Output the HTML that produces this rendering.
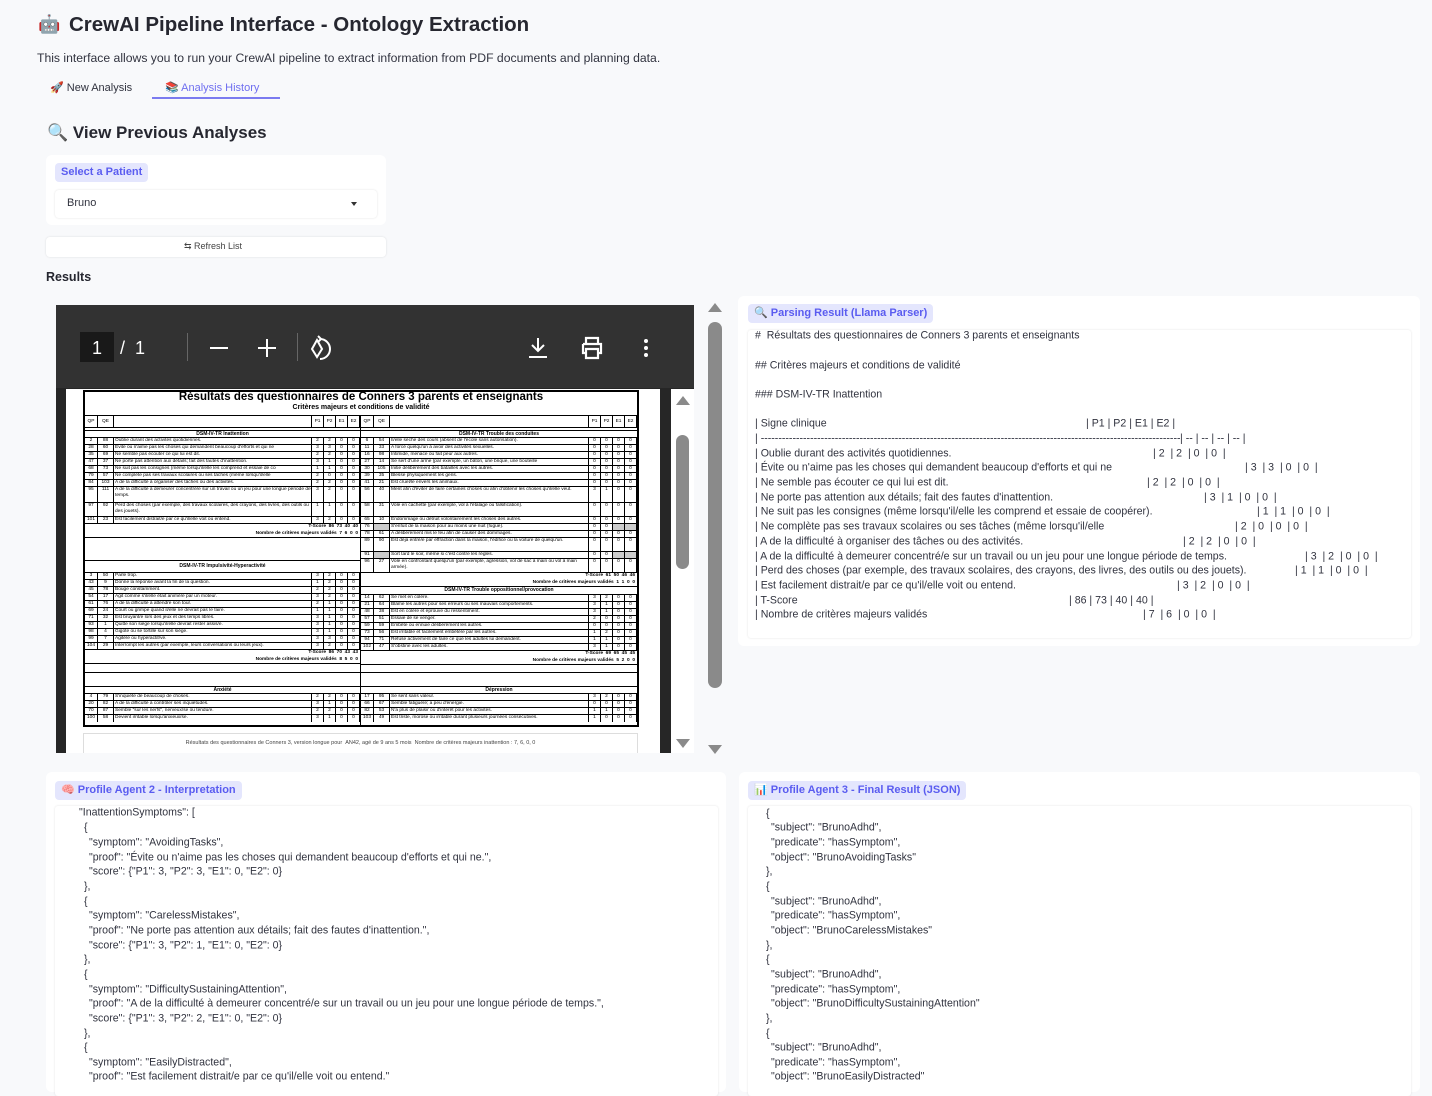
<!DOCTYPE html>
<html><head><meta charset="utf-8"><style>
*{margin:0;padding:0;box-sizing:border-box}
body{width:1432px;height:1080px;background:#f8f9fb;font-family:"Liberation Sans",sans-serif;color:#31333f;position:relative;overflow:hidden}
.a{position:absolute;white-space:nowrap}
.badge{position:absolute;background:#e4e6fd;color:#5a5cf0;font-weight:bold;font-size:11px;border-radius:4px;padding:3px 6px;height:19px;line-height:13px}
.panel{position:absolute;background:#fff;border-radius:6px}
.box{position:absolute;background:#fff;box-shadow:0 0 2px rgba(0,0,0,.12);border-radius:3px}
.t{position:absolute;font-size:10.6px;white-space:pre;color:#31333f;transform:translateY(1.5px)}
.half{position:absolute;font-family:"Liberation Sans",sans-serif;font-size:4.8px;color:#000}
.r{display:flex;border-bottom:1px solid #000;height:7px;line-height:6px;overflow:hidden}
.r span{border-right:1px solid #000;text-align:center;overflow:hidden}
.r span:nth-child(1){width:13px}.r span:nth-child(2){width:16px}
.r span:nth-child(3){flex:1;text-align:left;padding-left:1px}
.r span:nth-child(4),.r span:nth-child(5),.r span:nth-child(6),.r span:nth-child(7){width:12px}
.ttl{border-bottom:1px solid #000;text-align:center;font-weight:bold;height:8px;line-height:7px;font-size:5px}
.tall{height:14px;line-height:6px}
.ts{height:14px;text-align:right;font-weight:bold;padding-right:2px;line-height:6.5px;border-bottom:1px solid #000}
</style></head><body>

<div class="a" style="left:38px;top:14px;font-size:18px">🤖</div>
<div class="a" style="left:69px;top:13px;font-size:20.5px;font-weight:bold;color:#262730">CrewAI Pipeline Interface - Ontology Extraction</div>
<div class="a" style="left:37px;top:51px;font-size:12.2px">This interface allows you to run your CrewAI pipeline to extract information from PDF documents and planning data.</div>
<div class="a" style="left:50px;top:81px;font-size:11px">🚀 New Analysis</div>
<div class="a" style="left:165px;top:81px;font-size:11px;color:#6f6ff0">📚 Analysis History</div>
<div class="a" style="left:152px;top:97px;width:128px;height:2px;background:#7b7bf0"></div>
<div class="a" style="left:47px;top:123px;font-size:17px;font-weight:bold;color:#262730">🔍 View Previous Analyses</div>

<div class="panel" style="left:46px;top:155px;width:340px;height:70px"></div>
<div class="badge" style="left:55px;top:163px">Select a Patient</div>
<div class="box" style="left:55px;top:190px;width:322px;height:28px;border-radius:4px"></div>
<div class="a" style="left:67px;top:197px;font-size:11px">Bruno</div>
<div class="a" style="left:351px;top:202px;width:0;height:0;border-left:3px solid transparent;border-right:3px solid transparent;border-top:4px solid #333"></div>
<div class="box" style="left:46px;top:237px;width:340px;height:20px;border-radius:4px"></div>
<div class="a" style="left:184px;top:241px;font-size:9px;color:#444">⇆ Refresh List</div>
<div class="a" style="left:46px;top:270px;font-size:12.5px;font-weight:bold;color:#262730">Results</div>

<!-- PDF viewer -->
<div class="a" style="left:56px;top:305px;width:638px;height:448px;background:#262626"></div>
<div class="a" style="left:56px;top:305px;width:638px;height:83px;background:#323232"></div>
<div class="a" style="left:80px;top:332px;width:34px;height:30px;background:#191919"></div>
<div class="a" style="left:92px;top:338px;color:#fff;font-size:18px">1</div>
<div class="a" style="left:120px;top:338px;color:#fff;font-size:18px">/&nbsp;&nbsp;1</div>
<div class="a" style="left:187px;top:333px;width:1px;height:28px;background:#666"></div>
<div class="a" style="left:210px;top:347px;width:18px;height:2px;background:#fff"></div>
<div class="a" style="left:258px;top:347px;width:18px;height:2px;background:#fff"></div>
<div class="a" style="left:266px;top:339px;width:2px;height:18px;background:#fff"></div>
<div class="a" style="left:297px;top:333px;width:1px;height:28px;background:#666"></div>
<svg class="a" style="left:306px;top:335px" width="30" height="28" viewBox="0 0 30 28" fill="none" stroke="#fff" stroke-width="2"><path d="M11 5 L6 14 L11 22 L16 14 Z"/><path d="M14 4 A10 10 0 1 1 14 24"/><path d="M12 1 L15 4 L12 7"/></svg>
<svg class="a" style="left:527px;top:336px" width="22" height="24" viewBox="0 0 22 24" fill="none" stroke="#fff" stroke-width="2"><path d="M11 2 V15 M5 9 L11 15 L17 9 M2 21 H20"/></svg>
<svg class="a" style="left:579px;top:335px" width="26" height="26" viewBox="0 0 26 26" fill="none" stroke="#fff" stroke-width="2.2"><path d="M7 9 V3 H19 V9 M4 9 H22 V18 H19 M7 18 H4 V9 M7 14 H19 V23 H7 Z"/></svg>
<div class="a" style="left:644px;top:339px;width:4px;height:4px;border-radius:50%;background:#fff;box-shadow:0 7px 0 #fff,0 14px 0 #fff"></div>

<div class="a" style="left:66px;top:389px;width:594px;height:364px;background:#fff"></div>
<div class="a" style="left:671px;top:389px;width:23px;height:364px;background:#fff"></div>
<div class="a" style="left:676px;top:396px;border-left:7px solid transparent;border-right:7px solid transparent;border-bottom:9px solid #8a8a8a"></div>
<div class="a" style="left:676px;top:435px;width:13px;height:134px;border-radius:7px;background:#8a8a8a"></div>
<div class="a" style="left:676px;top:739px;border-left:7px solid transparent;border-right:7px solid transparent;border-top:9px solid #8a8a8a"></div>

<div class="a" style="left:708px;top:303px;border-left:7px solid transparent;border-right:7px solid transparent;border-bottom:9px solid #8a8a8a"></div>
<div class="a" style="left:708px;top:322px;width:14px;height:366px;border-radius:7px;background:#8a8a8a"></div>
<div class="a" style="left:708px;top:745px;border-left:7px solid transparent;border-right:7px solid transparent;border-top:9px solid #8a8a8a"></div>

<!-- PDF page table -->
<div class="a" style="left:83px;top:390px;width:556px;height:337px;border:2px solid #000"></div>
<div class="a" style="left:85px;top:391px;width:552px;text-align:center;font-size:11.5px;font-weight:bold;color:#000">Résultats des questionnaires de Conners 3 parents et enseignants</div>
<div class="a" style="left:85px;top:404px;width:552px;text-align:center;font-size:7px;font-weight:bold;color:#000">Critères majeurs et conditions de validité</div>
<div class="a" style="left:85px;top:415px;width:552px;height:1px;background:#000"></div>
<div class="a" style="left:360px;top:415px;width:1px;height:310px;background:#000"></div>

<div class="half" style="left:85px;top:416px;width:275px">
<div class="r" style="height:12px;line-height:11px"><span>QP</span><span>QE</span><span></span><span>P1</span><span>P2</span><span>E1</span><span>E2</span></div>
<div class="ttl" style="margin-top:2px;border-top:1px solid #000">DSM-IV-TR Inattention</div>
<div class="r"><span>2</span><span>88</span><span>Oublie durant des activités quotidiennes.</span><span>2</span><span>2</span><span>0</span><span>0</span></div>
<div class="r"><span>28</span><span>60</span><span>Évite ou n'aime pas les choses qui demandent beaucoup d'efforts et qui ne</span><span>3</span><span>3</span><span>0</span><span>0</span></div>
<div class="r"><span>35</span><span>69</span><span>Ne semble pas écouter ce qui lui est dit.</span><span>2</span><span>2</span><span>0</span><span>0</span></div>
<div class="r"><span>47</span><span>37</span><span>Ne porte pas attention aux détails; fait des fautes d'inattention.</span><span>3</span><span>1</span><span>0</span><span>0</span></div>
<div class="r"><span>68</span><span>73</span><span>Ne suit pas les consignes (même lorsqu'il/elle les comprend et essaie de co</span><span>1</span><span>1</span><span>0</span><span>0</span></div>
<div class="r"><span>79</span><span>57</span><span>Ne complète pas ses travaux scolaires ou ses tâches (même lorsqu'il/elle</span><span>2</span><span>0</span><span>0</span><span>0</span></div>
<div class="r"><span>84</span><span>103</span><span>A de la difficulté à organiser des tâches ou des activités.</span><span>2</span><span>2</span><span>0</span><span>0</span></div>
<div class="r tall" style="height:16px"><span>95</span><span>111</span><span>A de la difficulté à demeurer concentré/e sur un travail ou un jeu pour une longue période de temps.</span><span>3</span><span>2</span><span>0</span><span>0</span></div>
<div class="r tall"><span>97</span><span>92</span><span>Perd des choses (par exemple, des travaux scolaires, des crayons, des livres, des outils ou des jouets).</span><span>1</span><span>1</span><span>0</span><span>0</span></div>
<div class="r"><span>101</span><span>23</span><span>Est facilement distrait/e par ce qu'il/elle voit ou entend.</span><span>3</span><span>2</span><span>0</span><span>0</span></div>
<div class="ts">T-Score &nbsp;86 &nbsp;73 &nbsp;40 &nbsp;40<br>Nombre de critères majeurs validés &nbsp;7 &nbsp;6 &nbsp;0 &nbsp;0</div>
<div style="height:23px;border-bottom:1px solid #000"></div>
<div class="ttl" style="height:12px;line-height:11px">DSM-IV-TR Impulsivité-Hyperactivité</div>
<div class="r"><span>3</span><span>50</span><span>Parle trop.</span><span>3</span><span>2</span><span>0</span><span>0</span></div>
<div class="r"><span>43</span><span>9</span><span>Donne la réponse avant la fin de la question.</span><span>1</span><span>2</span><span>0</span><span>0</span></div>
<div class="r"><span>45</span><span>78</span><span>Bouge constamment.</span><span>2</span><span>2</span><span>0</span><span>0</span></div>
<div class="r"><span>54</span><span>17</span><span>Agit comme s'il/elle était animé/e par un moteur.</span><span>3</span><span>2</span><span>0</span><span>0</span></div>
<div class="r"><span>61</span><span>76</span><span>A de la difficulté à attendre son tour.</span><span>2</span><span>1</span><span>0</span><span>0</span></div>
<div class="r"><span>69</span><span>24</span><span>Court ou grimpe quand il/elle ne devrait pas le faire.</span><span>1</span><span>1</span><span>0</span><span>0</span></div>
<div class="r"><span>71</span><span>32</span><span>Est bruyant/e lors des jeux et des temps libres.</span><span>3</span><span>1</span><span>0</span><span>0</span></div>
<div class="r"><span>93</span><span>1</span><span>Quitte son siège lorsqu'il/elle devrait rester assis/e.</span><span>3</span><span>1</span><span>0</span><span>0</span></div>
<div class="r"><span>98</span><span>4</span><span>Gigote ou se tortille sur son siège.</span><span>3</span><span>1</span><span>0</span><span>0</span></div>
<div class="r"><span>99</span><span>7</span><span>Agité/e ou hyperactif/ve.</span><span>3</span><span>3</span><span>0</span><span>0</span></div>
<div class="r"><span>104</span><span>29</span><span>Interrompt les autres (par exemple, leurs conversations ou leurs jeux).</span><span>3</span><span>2</span><span>0</span><span>0</span></div>
<div class="ts">T-Score &nbsp;86 &nbsp;70 &nbsp;43 &nbsp;43<br>Nombre de critères majeurs validés &nbsp;8 &nbsp;5 &nbsp;0 &nbsp;0</div>
</div>

<div class="half" style="left:361px;top:416px;width:276px">
<div class="r" style="height:12px;line-height:11px"><span>QP</span><span>QE</span><span></span><span>P1</span><span>P2</span><span>E1</span><span>E2</span></div>
<div class="ttl" style="margin-top:2px;border-top:1px solid #000">DSM-IV-TR Trouble des conduites</div>
<div class="r"><span>6</span><span>54</span><span>Il/elle sèche des cours (absent de l'école sans autorisation).</span><span>0</span><span>0</span><span>0</span><span>0</span></div>
<div class="r"><span>11</span><span>33</span><span>A forcé quelqu'un à avoir des activités sexuelles.</span><span>0</span><span>0</span><span>0</span><span>0</span></div>
<div class="r"><span>16</span><span>98</span><span>Intimide, menace ou fait peur aux autres.</span><span>0</span><span>0</span><span>0</span><span>0</span></div>
<div class="r"><span>27</span><span>14</span><span>Se sert d'une arme (par exemple, un bâton, une brique, une bouteille</span><span>0</span><span>0</span><span>0</span><span>0</span></div>
<div class="r"><span>30</span><span>105</span><span>Initie délibérément des batailles avec les autres.</span><span>0</span><span>0</span><span>0</span><span>0</span></div>
<div class="r"><span>39</span><span>35</span><span>Blesse physiquement les gens.</span><span>0</span><span>0</span><span>0</span><span>0</span></div>
<div class="r"><span>41</span><span>21</span><span>Est cruel/le envers les animaux.</span><span>0</span><span>0</span><span>0</span><span>0</span></div>
<div class="r tall" style="height:16px"><span>56</span><span>40</span><span>Ment afin d'éviter de faire certaines choses ou afin d'obtenir les choses qu'il/elle veut.</span><span>3</span><span>1</span><span>0</span><span>0</span></div>
<div class="r tall"><span>58</span><span>31</span><span>Vole en cachette (par exemple, vol à l'étalage ou falsification).</span><span>0</span><span>0</span><span>0</span><span>0</span></div>
<div class="r"><span>65</span><span>10</span><span>Endommage ou détruit volontairement les choses des autres.</span><span>0</span><span>0</span><span>0</span><span>0</span></div>
<div class="r"><span>76</span><span style="background:#ccc"></span><span>S'enfuit de la maison pour au moins une nuit (fugue).</span><span>0</span><span>0</span><span style="background:#ccc"></span><span style="background:#ccc"></span></div>
<div class="r"><span>78</span><span>61</span><span>A délibérément mis le feu afin de causer des dommages.</span><span>0</span><span>0</span><span>0</span><span>0</span></div>
<div class="r tall"><span>89</span><span>90</span><span>Est déjà entré/e par effraction dans la maison, l'édifice ou la voiture de quelqu'un.</span><span>0</span><span>0</span><span>0</span><span>0</span></div>
<div class="r"><span>91</span><span style="background:#ccc"></span><span>Sort tard le soir, même si c'est contre les règles.</span><span>0</span><span>0</span><span style="background:#ccc"></span><span style="background:#ccc"></span></div>
<div class="r tall"><span>96</span><span>27</span><span>Vole en confrontant quelqu'un (par exemple, agression, vol de sac à main ou vol à main armée).</span><span>0</span><span>0</span><span>0</span><span>0</span></div>
<div class="ts">T-Score &nbsp;61 &nbsp;50 &nbsp;46 &nbsp;46<br>Nombre de critères majeurs validés &nbsp;1 &nbsp;1 &nbsp;0 &nbsp;0</div>
<div class="ttl">DSM-IV-TR Trouble oppositionnel/provocation</div>
<div class="r"><span>14</span><span>62</span><span>Se met en colère.</span><span>3</span><span>2</span><span>0</span><span>0</span></div>
<div class="r"><span>21</span><span>64</span><span>Blâme les autres pour ses erreurs ou ses mauvais comportements.</span><span>3</span><span>1</span><span>0</span><span>0</span></div>
<div class="r"><span>48</span><span>38</span><span>Est en colère et éprouve du ressentiment.</span><span>3</span><span>1</span><span>0</span><span>0</span></div>
<div class="r"><span>57</span><span>51</span><span>Essaie de se venger.</span><span>2</span><span>0</span><span>0</span><span>0</span></div>
<div class="r"><span>59</span><span>59</span><span>Embête ou ennuie délibérément les autres.</span><span>0</span><span>0</span><span>0</span><span>0</span></div>
<div class="r"><span>73</span><span>56</span><span>Est irritable et facilement embêté/e par les autres.</span><span>1</span><span>2</span><span>0</span><span>0</span></div>
<div class="r"><span>94</span><span>71</span><span>Refuse activement de faire ce que les adultes lui demandent.</span><span>1</span><span>1</span><span>0</span><span>0</span></div>
<div class="r"><span>102</span><span>47</span><span>S'obstine avec les adultes.</span><span>3</span><span>1</span><span>0</span><span>0</span></div>
<div class="ts">T-Score &nbsp;69 &nbsp;65 &nbsp;45 &nbsp;45<br>Nombre de critères majeurs validés &nbsp;5 &nbsp;2 &nbsp;0 &nbsp;0</div>
</div>

<div class="a" style="left:85px;top:672px;width:552px;height:1px;background:#000"></div>
<div class="a" style="left:85px;top:686px;width:552px;height:1px;background:#000"></div>
<div class="half" style="left:85px;top:687px;width:275px">
<div class="ttl" style="height:7px;line-height:6px">Anxiété</div>
<div class="r"><span>4</span><span>79</span><span>S'inquiète de beaucoup de choses.</span><span>2</span><span>2</span><span>0</span><span>0</span></div>
<div class="r"><span>20</span><span>82</span><span>A de la difficulté à contrôler ses inquiétudes.</span><span>3</span><span>1</span><span>0</span><span>0</span></div>
<div class="r"><span>70</span><span>87</span><span>Semble "sur les nerfs", nerveux/se ou tendu/e.</span><span>2</span><span>2</span><span>0</span><span>0</span></div>
<div class="r" style="border:0"><span>100</span><span>58</span><span>Devient irritable lorsqu'anxieux/se.</span><span>3</span><span>1</span><span>0</span><span>0</span></div>
</div>
<div class="half" style="left:361px;top:687px;width:276px">
<div class="ttl" style="height:7px;line-height:6px">Dépression</div>
<div class="r"><span>17</span><span>95</span><span>Se sent sans valeur.</span><span>3</span><span>2</span><span>0</span><span>0</span></div>
<div class="r"><span>66</span><span>67</span><span>Semble fatigué/e; a peu d'énergie.</span><span>0</span><span>0</span><span>0</span><span>0</span></div>
<div class="r"><span>82</span><span>53</span><span>N'a plus de plaisir ou d'intérêt pour les activités.</span><span>1</span><span>1</span><span>0</span><span>0</span></div>
<div class="r" style="border:0"><span>103</span><span>49</span><span>Est triste, morose ou irritable durant plusieurs journées consécutives.</span><span>1</span><span>0</span><span>0</span><span>0</span></div>
</div>
<div class="a" style="left:83px;top:733px;width:555px;height:20px;border:1px solid #ddd;border-bottom:0"></div>
<div class="a" style="left:83px;top:740px;width:555px;text-align:center;font-size:5.5px;color:#444">Résultats des questionnaires de Conners 3, version longue pour &nbsp;AN42, agé de 9 ans 5 mois &nbsp;Nombre de critères majeurs inattention : 7, 6, 0, 0</div>

<!-- Parsing result -->
<div class="panel" style="left:738px;top:296px;width:682px;height:350px"></div>
<div class="badge" style="left:748px;top:304px">🔍 Parsing Result (Llama Parser)</div>
<div class="box" style="left:748px;top:330px;width:663px;height:308px"></div>
<div class="t" style="left:755px;top:328px">#  Résultats des questionnaires de Conners 3 parents et enseignants</div>
<div class="t" style="left:755px;top:358px">## Critères majeurs et conditions de validité</div>
<div class="t" style="left:755px;top:387px">### DSM-IV-TR Inattention</div>
<div class="t" style="left:755px;top:416px">| Signe clinique</div><div class="t" style="left:1086px;top:416px">| P1 | P2 | E1 | E2 |</div>
<div class="t" style="left:755px;top:431px;width:425px;overflow:hidden">| --------------------------------------------------------------------------------------------------------------------------------------------------------------------------------------</div><div class="t" style="left:1180px;top:431px">| -- | -- | -- | -- |</div>
<div class="t" style="left:755px;top:446px">| Oublie durant des activités quotidiennes.</div><div class="t" style="left:1153px;top:446px">| 2  | 2  | 0  | 0  |</div>
<div class="t" style="left:755px;top:460px">| Évite ou n'aime pas les choses qui demandent beaucoup d'efforts et qui ne</div><div class="t" style="left:1245px;top:460px">| 3  | 3  | 0  | 0  |</div>
<div class="t" style="left:755px;top:475px">| Ne semble pas écouter ce qui lui est dit.</div><div class="t" style="left:1147px;top:475px">| 2  | 2  | 0  | 0  |</div>
<div class="t" style="left:755px;top:490px">| Ne porte pas attention aux détails; fait des fautes d'inattention.</div><div class="t" style="left:1204px;top:490px">| 3  | 1  | 0  | 0  |</div>
<div class="t" style="left:755px;top:504px">| Ne suit pas les consignes (même lorsqu'il/elle les comprend et essaie de coopérer).</div><div class="t" style="left:1257px;top:504px">| 1  | 1  | 0  | 0  |</div>
<div class="t" style="left:755px;top:519px">| Ne complète pas ses travaux scolaires ou ses tâches (même lorsqu'il/elle</div><div class="t" style="left:1235px;top:519px">| 2  | 0  | 0  | 0  |</div>
<div class="t" style="left:755px;top:534px">| A de la difficulté à organiser des tâches ou des activités.</div><div class="t" style="left:1183px;top:534px">| 2  | 2  | 0  | 0  |</div>
<div class="t" style="left:755px;top:549px">| A de la difficulté à demeurer concentré/e sur un travail ou un jeu pour une longue période de temps.</div><div class="t" style="left:1305px;top:549px">| 3  | 2  | 0  | 0  |</div>
<div class="t" style="left:755px;top:563px">| Perd des choses (par exemple, des travaux scolaires, des crayons, des livres, des outils ou des jouets).</div><div class="t" style="left:1295px;top:563px">| 1  | 1  | 0  | 0  |</div>
<div class="t" style="left:755px;top:578px">| Est facilement distrait/e par ce qu'il/elle voit ou entend.</div><div class="t" style="left:1177px;top:578px">| 3  | 2  | 0  | 0  |</div>
<div class="t" style="left:755px;top:593px">| T-Score</div><div class="t" style="left:1069px;top:593px">| 86 | 73 | 40 | 40 |</div>
<div class="t" style="left:755px;top:607px">| Nombre de critères majeurs validés</div><div class="t" style="left:1143px;top:607px">| 7  | 6  | 0  | 0  |</div>

<!-- Agent 2 -->
<div class="panel" style="left:46px;top:772px;width:680px;height:320px"></div>
<div class="badge" style="left:55px;top:781px">🧠 Profile Agent 2 - Interpretation</div>
<div class="box" style="left:55px;top:806px;width:663px;height:290px"></div>
<div class="t" style="left:79px;top:805px">"InattentionSymptoms": [</div>
<div class="t" style="left:84px;top:820px">{</div>
<div class="t" style="left:89px;top:835px">"symptom": "AvoidingTasks",</div>
<div class="t" style="left:89px;top:850px">"proof": "Évite ou n'aime pas les choses qui demandent beaucoup d'efforts et qui ne.",</div>
<div class="t" style="left:89px;top:864px">"score": {"P1": 3, "P2": 3, "E1": 0, "E2": 0}</div>
<div class="t" style="left:84px;top:879px">},</div>
<div class="t" style="left:84px;top:894px">{</div>
<div class="t" style="left:89px;top:908px">"symptom": "CarelessMistakes",</div>
<div class="t" style="left:89px;top:923px">"proof": "Ne porte pas attention aux détails; fait des fautes d'inattention.",</div>
<div class="t" style="left:89px;top:938px">"score": {"P1": 3, "P2": 1, "E1": 0, "E2": 0}</div>
<div class="t" style="left:84px;top:952px">},</div>
<div class="t" style="left:84px;top:967px">{</div>
<div class="t" style="left:89px;top:982px">"symptom": "DifficultySustainingAttention",</div>
<div class="t" style="left:89px;top:996px">"proof": "A de la difficulté à demeurer concentré/e sur un travail ou un jeu pour une longue période de temps.",</div>
<div class="t" style="left:89px;top:1011px">"score": {"P1": 3, "P2": 2, "E1": 0, "E2": 0}</div>
<div class="t" style="left:84px;top:1026px">},</div>
<div class="t" style="left:84px;top:1040px">{</div>
<div class="t" style="left:89px;top:1055px">"symptom": "EasilyDistracted",</div>
<div class="t" style="left:89px;top:1069px">"proof": "Est facilement distrait/e par ce qu'il/elle voit ou entend."</div>

<!-- Agent 3 -->
<div class="panel" style="left:739px;top:772px;width:681px;height:320px"></div>
<div class="badge" style="left:748px;top:781px">📊 Profile Agent 3 - Final Result (JSON)</div>
<div class="box" style="left:748px;top:806px;width:663px;height:290px"></div>
<div class="t" style="left:766px;top:806px">{</div>
<div class="t" style="left:771px;top:820px">"subject": "BrunoAdhd",</div>
<div class="t" style="left:771px;top:835px">"predicate": "hasSymptom",</div>
<div class="t" style="left:771px;top:850px">"object": "BrunoAvoidingTasks"</div>
<div class="t" style="left:766px;top:864px">},</div>
<div class="t" style="left:766px;top:879px">{</div>
<div class="t" style="left:771px;top:894px">"subject": "BrunoAdhd",</div>
<div class="t" style="left:771px;top:908px">"predicate": "hasSymptom",</div>
<div class="t" style="left:771px;top:923px">"object": "BrunoCarelessMistakes"</div>
<div class="t" style="left:766px;top:938px">},</div>
<div class="t" style="left:766px;top:952px">{</div>
<div class="t" style="left:771px;top:967px">"subject": "BrunoAdhd",</div>
<div class="t" style="left:771px;top:982px">"predicate": "hasSymptom",</div>
<div class="t" style="left:771px;top:996px">"object": "BrunoDifficultySustainingAttention"</div>
<div class="t" style="left:766px;top:1011px">},</div>
<div class="t" style="left:766px;top:1026px">{</div>
<div class="t" style="left:771px;top:1040px">"subject": "BrunoAdhd",</div>
<div class="t" style="left:771px;top:1055px">"predicate": "hasSymptom",</div>
<div class="t" style="left:771px;top:1069px">"object": "BrunoEasilyDistracted"</div>
</body></html>
